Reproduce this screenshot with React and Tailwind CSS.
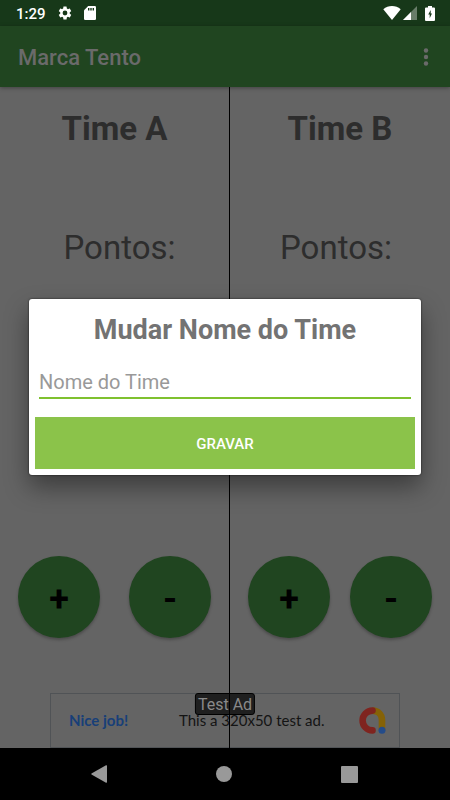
import React, { useState } from 'react';

function SettingsIcon() {
  return (
    <svg viewBox="0 0 24 24" className="w-4 h-4" fill="currentColor" aria-hidden="true">
      <path d="M19.14 12.94c.04-.3.06-.61.06-.94 0-.32-.02-.64-.07-.94l2.03-1.58a.49.49 0 0 0 .12-.61l-1.92-3.32a.49.49 0 0 0-.59-.22l-2.39.96c-.5-.38-1.03-.7-1.62-.94l-.36-2.54a.48.48 0 0 0-.48-.41h-3.84c-.24 0-.43.17-.47.41l-.36 2.54c-.59.24-1.13.57-1.62.94l-2.39-.96a.48.48 0 0 0-.59.22L2.74 8.87c-.12.21-.08.47.12.61l2.03 1.58c-.05.3-.09.63-.09.94s.02.64.07.94l-2.03 1.58a.49.49 0 0 0-.12.61l1.92 3.32c.12.22.37.29.59.22l2.39-.96c.5.38 1.03.7 1.62.94l.36 2.54c.05.24.24.41.48.41h3.84c.24 0 .44-.17.47-.41l.36-2.54c.59-.24 1.13-.56 1.62-.94l2.39.96c.22.08.47 0 .59-.22l1.92-3.32a.49.49 0 0 0-.12-.61l-2.01-1.58zM12 15.6A3.6 3.6 0 1 1 12 8.4a3.6 3.6 0 0 1 0 7.2z" />
    </svg>
  );
}

function SdCardIcon() {
  return (
    <svg viewBox="0 0 12 14" className="w-3 h-3.5" aria-hidden="true">
      <path d="M4.2 0H10.8A1.2 1.2 0 0 1 12 1.2V12.8A1.2 1.2 0 0 1 10.8 14H1.2A1.2 1.2 0 0 1 0 12.8V4.2Z" fill="#fff" />
      <path d="M4 2H5.4V4.5H4ZM6.3 2H7.7V4.5H6.3ZM8.6 2H10V4.5H8.6Z" fill="#173819" />
    </svg>
  );
}

function WifiIcon() {
  return (
    <svg viewBox="0 0 18 14" className="w-[18px] h-3.5" fill="currentColor" aria-hidden="true">
      <path d="M9 14 .3 3.2C2.8 1.1 5.8 0 9 0s6.2 1.1 8.7 3.2Z" />
    </svg>
  );
}

function SignalIcon() {
  return (
    <svg viewBox="0 0 14 14" className="w-3.5 h-3.5" fill="currentColor" aria-hidden="true">
      <path d="M0 14 14 0V14Z" opacity=".35" />
      <path d="M0 14 8 6V14Z" />
    </svg>
  );
}

function BatteryIcon() {
  return (
    <svg viewBox="0 0 10 15" className="w-2.5 h-[15px]" aria-hidden="true">
      <path d="M3 0H7V1.5H9A1 1 0 0 1 10 2.5V14A1 1 0 0 1 9 15H1A1 1 0 0 1 0 14V2.5A1 1 0 0 1 1 1.5H3Z" fill="#fff" />
      <path d="M5.7 4 3.2 8.6H4.7V12.2L7 7.6H5.7Z" fill="#173819" />
    </svg>
  );
}

function AdMobLogo() {
  return (
    <svg viewBox="0 0 27 27" className="w-[27px] h-[27px]" fill="none" aria-hidden="true">
      <path d="M13.5 3.6C19 3.6 23 7.5 23 13V23" stroke="#856207" strokeWidth="6.6" />
      <path d="M13.5 3.6A9.9 9.9 0 0 0 13.5 23.4" stroke="#7f241f" strokeWidth="6.6" strokeLinecap="round" />
      <circle cx="23" cy="23.3" r="3.5" fill="#244c8a" />
    </svg>
  );
}

function RoundButton({ label, children, onClick }) {
  return (
    <button
      type="button"
      aria-label={label}
      onClick={onClick}
      className="w-[82px] h-[82px] pt-1 rounded-full bg-[#204520] text-black text-[36px] font-bold shadow-[0_2px_3px_rgba(0,0,0,0.25)] flex items-center justify-center"
    >
      {children}
    </button>
  );
}

function Team({ name, pointsClass }) {
  return (
    <section className="min-w-0 flex flex-col text-[#2d2d2d]">
      <h2 className="mt-5 h-11 leading-[44px] text-[33px] font-bold text-center">{name}</h2>
      <p className={`mt-[75px] h-11 leading-[44px] text-[33px] text-center ${pointsClass}`}>Pontos:</p>
      <div className="mt-auto mb-[110px] px-[18px] flex justify-between">
        <RoundButton label={`Somar ponto ${name}`}>+</RoundButton>
        <RoundButton label={`Tirar ponto ${name}`}>-</RoundButton>
      </div>
    </section>
  );
}

export default function App() {
  const [teamName, setTeamName] = useState('');

  const handleSave = (e) => {
    e.preventDefault();
  };

  return (
    <div className="min-h-screen flex flex-col bg-[#646464] font-[Roboto,sans-serif]">
      {/* Status bar */}
      <div className="h-[26px] pl-4 pr-[15px] flex items-center bg-[#173819] text-white">
        <span className="pt-0.5 text-[15px] font-medium">1:29</span>
        <div className="ml-[11px] flex items-center gap-[11px]">
          <SettingsIcon />
          <SdCardIcon />
        </div>
        <div className="ml-auto flex items-center">
          <WifiIcon />
          <span className="ml-0.5 mr-2">
            <SignalIcon />
          </span>
          <BatteryIcon />
        </div>
      </div>

      <div className="relative flex-1 flex flex-col">
        <header className="h-[61px] px-[18px] flex items-center justify-between bg-[#204520] text-[#6a6a6a] shadow-[0_1px_4px_rgba(0,0,0,0.35)]">
          <h1 className="pt-0.5 text-[22px] font-medium">Marca Tento</h1>
          <button type="button" aria-label="Mais opções">
            <svg viewBox="0 0 12 18" className="w-3 h-[18px]" fill="currentColor" aria-hidden="true">
              <circle cx="6" cy="2.5" r="2.2" />
              <circle cx="6" cy="9" r="2.2" />
              <circle cx="6" cy="15.5" r="2.2" />
            </svg>
          </button>
        </header>

        <main className="relative flex-1 grid grid-cols-[229fr_1px_220fr]">
          <Team name="Time A" pointsClass="pl-2.5" />
          <div className="bg-black relative z-10" />
          <Team name="Time B" pointsClass="pr-2" />

          {/* Ad banner */}
          <div className="absolute bottom-0 inset-x-[50px] h-[55px] border border-[#505356] flex items-center">
            <strong className="ml-[18px] w-[110px] font-[Lato,sans-serif] text-[15px] font-bold text-[#183f78]">Nice job!</strong>
            <span className="font-[Lato,sans-serif] text-[15px] text-[#141414]">This a 320x50 test ad.</span>
            <span className="ml-auto mr-[13px]">
              <AdMobLogo />
            </span>
            <span className="absolute -top-px left-1/2 -translate-x-1/2 h-[22px] px-0.5 rounded-[3px] border border-black bg-[#1f1f1f] text-[#8a8a8a] text-base leading-[22px] whitespace-nowrap">
              Test Ad
            </span>
          </div>
        </main>

        {/* Dialog */}
        <div className="absolute inset-0 z-20 px-[29px] flex items-center">
          <form
            role="dialog"
            aria-labelledby="dialog-title"
            onSubmit={handleSave}
            className="w-full p-1.5 rounded-[3px] bg-white shadow-[0_12px_24px_rgba(0,0,0,0.4),0_0_2px_rgba(0,0,0,0.8)]"
          >
            <h2 id="dialog-title" className="mt-1 h-10 leading-[42px] text-[27px] font-bold text-center text-[#737373]">
              Mudar Nome do Time
            </h2>
            <div className="mt-4 px-1">
              <input
                type="text"
                aria-label="Nome do Time"
                placeholder="Nome do Time"
                value={teamName}
                onChange={(e) => setTeamName(e.target.value)}
                className="block w-full h-[34px] pt-0.5 border-b-2 border-[#7fc12f] text-xl text-[#333333] placeholder:text-[#999999] outline-none"
              />
            </div>
            <button type="submit" className="mt-[18px] block w-full h-[52px] pt-0.5 bg-[#8bc34a] text-white text-[15px] font-medium">
              GRAVAR
            </button>
          </form>
        </div>
      </div>

      {/* Navigation bar */}
      <nav className="h-[52px] pl-[91px] pr-[92px] flex items-center justify-between bg-black text-[#999999]">
        <button type="button" aria-label="Voltar">
          <svg viewBox="0 0 16 18" className="w-4 h-[18px]" fill="currentColor" aria-hidden="true">
            <path d="M15 .3Q16 0 16 1V17Q16 18 15 17.7L.5 9.6Q0 9 .5 8.4Z" />
          </svg>
        </button>
        <button type="button" aria-label="Início" className="w-4 h-4 rounded-full bg-[#999999]" />
        <button type="button" aria-label="Recentes" className="w-[17px] h-[17px] rounded-[1px] bg-[#999999]" />
      </nav>
    </div>
  );
}
